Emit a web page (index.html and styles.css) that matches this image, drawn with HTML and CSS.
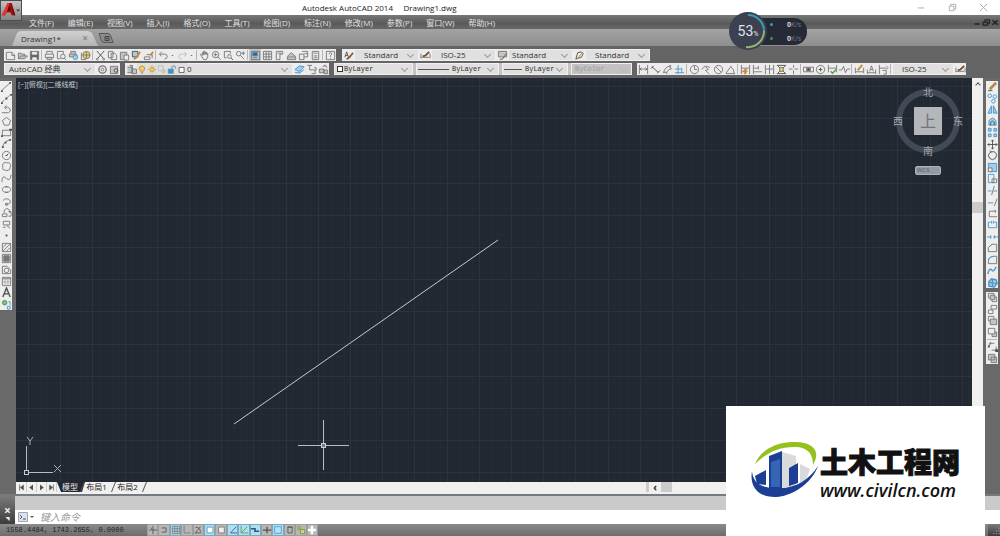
FILE: index.html
```html
<!DOCTYPE html>
<html lang="zh-CN">
  <head>
    <meta charset="utf-8">
    <title>Autodesk AutoCAD 2014 Drawing1.dwg</title>
    <link rel="stylesheet" href="styles.css">
  </head>
  <body>
    <header class="titlebar">
      <h1>Autodesk AutoCAD 2014 &nbsp;&nbsp;&nbsp; Drawing1.dwg</h1>
      <div class="window-buttons" data-tools="minimize restore close"></div>
    </header>
    <button class="app-button" aria-label="AutoCAD">
      <svg viewBox="0 0 21 20">
        <path d="M1 15 7 2h4l4 13h-4l-1-3H6l-2 3z" fill="#a80f12"/>
        <path d="M7 2h2L5 15H1z" fill="#e5342b"/>
        <path d="M9 5 7 10h3z" fill="#4a0808"/>
        <path d="M10 2h1l4 13h-2z" fill="#740a0c"/>
        <path d="M16 9h4l-2 2z" fill="#333"/>
      </svg>
    </button>

    <nav class="menubar">
      <button>文件(F)</button>
      <button>编辑(E)</button>
      <button>视图(V)</button>
      <button>插入(I)</button>
      <button>格式(O)</button>
      <button>工具(T)</button>
      <button>绘图(D)</button>
      <button>标注(N)</button>
      <button>修改(M)</button>
      <button>参数(P)</button>
      <button>窗口(W)</button>
      <button>帮助(H)</button>
      <div class="mdi-buttons" data-tools="mdimin mdirestore mdiclose"></div>
    </nav>

    <div class="filetabs">
      <div class="filetab">
        <span>Drawing1*</span>
        <button aria-label="关闭">×</button>
      </div>
      <button class="newtab" aria-label="新建">
        <svg viewBox="0 0 16 11"><path d="M1 1h9q2 0 3 3l2 6H6Q4 10 3 7z" fill="#8b8b8b" stroke="#555"/><path d="M7 4h4v4H7zM9 5v2M8 6h2" fill="none" stroke="#444"/></svg>
      </button>
    </div>

    <div class="toolbars">
      <div class="toolrow">
        <div class="bar" data-tools="new open save | print preview publish web | cut copy paste match block | undo drop redo drop | pan zoomrt zoomwin zoomprev | props center palette sheet markup calc | help"></div>
        <div class="bar styles">
          <span data-tools="textstyle"></span>
          <label class="combo indent"><select aria-label="文字样式"><option>Standard</option></select></label>
          <span data-tools="dimstyle"></span>
          <label class="combo indent"><select aria-label="标注样式"><option>ISO-25</option></select></label>
          <span data-tools="tablestyle"></span>
          <label class="combo"><select aria-label="表格样式"><option>Standard</option></select></label>
          <span data-tools="leaderstyle"></span>
          <label class="combo indent"><select aria-label="多重引线样式"><option>Standard</option></select></label>
        </div>
      </div>
      <div class="toolrow">
        <div class="bar">
          <label class="combo workspace"><select aria-label="工作空间"><option>AutoCAD 经典</option></select></label>
          <span data-tools="gear wsave"></span>
        </div>
        <div class="bar">
          <span data-tools="layers"></span>
          <span class="layerstate" data-tools="bulb sun freeze lock laycolor"></span>
          <label class="combo layer"><select aria-label="图层"><option>0</option></select></label>
          <span data-tools="laycur layprev laystate"></span>
        </div>
        <div class="bar props">
          <label class="combo mono color"><i class="swatch"></i><select aria-label="颜色"><option>ByLayer</option></select></label>
          <label class="combo mono ltype"><i class="rule"></i><select aria-label="线型"><option>ByLayer</option></select></label>
          <label class="combo mono lweight"><i class="rule short"></i><select aria-label="线宽"><option>ByLayer</option></select></label>
          <label class="combo mono plot"><select aria-label="打印样式" disabled><option>ByColor</option></select></label>
        </div>
        <div class="bar">
          <span data-tools="dlinear daligned darc dordinate | dradius djog ddiam dangle | dquick dbase dcont dspace dbreak | dtol dcenter dinspect djogline | dedit dtedit dupdate |"></span>
          <label class="combo dim"><select aria-label="标注样式控制"><option>ISO-25</option></select></label>
          <span data-tools="dimstyle"></span>
        </div>
      </div>
    </div>

    <main class="work">
      <aside class="side left">
        <div class="column draw" data-tools="line xline pline polygon rect arc circle cloud spline ellipse earc insert mkblock point hatch gradient region table text addsel"></div>
      </aside>
      <section class="view">
        <div class="canvas">
          <svg class="drawing">
            <defs>
              <pattern id="grid" x="12" y="8" width="161" height="161" patternUnits="userSpaceOnUse">
                <path id="minor" stroke="#232b35"/>
                <path id="major" stroke="#2a333e"/>
              </pattern>
            </defs>
            <rect width="100%" height="100%" fill="url(#grid)"/>
            <path d="M218 346 482 162" stroke="#c9c9c9"/>
            <path d="M307.500 342v50M282 367.500h51" stroke="#b9bcc0"/>
            <rect x="305.500" y="365.500" width="4" height="4" fill="#777c83" stroke="#c9ccd0"/>
            <path d="M10.500 392V368M12 394.500h25" stroke="#b9bcc0"/>
            <rect x="8.500" y="392.500" width="4" height="4" fill="none" stroke="#c9ccd0"/>
            <path d="m11 359 3 4 3-4M14 363v4M38 387l7 7m0-7-7 7" fill="none" stroke="#a9adb2"/>
          </svg>
          <span class="viewlabel">[−][俯视][二维线框]</span>
          <div class="viewcube">
            <span class="n">北</span>
            <span class="w">西</span>
            <button class="face">上</button>
            <span class="e">东</span>
            <span class="s">南</span>
            <button class="wcs">WCS</button>
          </div>
        </div>
        <div class="layouts">
          <div class="layoutnav" data-tools="first prev next last"></div>
          <button class="layout current">模型</button>
          <button class="layout">布局1</button>
          <button class="layout">布局2</button>
          <div class="hscroll"><i></i><b>‹</b><em></em></div>
        </div>
      </section>
      <div class="vscroll"><b></b><em></em></div>
      <aside class="side right">
        <div class="column modify" data-tools="erase mcopy mirror offset array move rotate scale stretch trim extend breakpt break join chamfer fillet blend explode"></div>
        <div class="column order" data-tools="front back above under | annofront hatchback"></div>
      </aside>
    </main>

    <section class="command">
      <div class="grip"><button aria-label="关闭">×</button><span>◥</span></div>
      <div class="history"></div>
      <div class="prompt">
        <svg viewBox="0 0 18 10"><path d="M.5.5h9v9h-9z" fill="#dce3ec" stroke="#a0a8b2"/><path d="m2 3 2 2-2 2M5 7h3" fill="none" stroke="#445a78"/><path d="M12 4h4l-2 2z" fill="#555"/></svg>
        <input type="text" aria-label="命令" placeholder="键入命令">
      </div>
    </section>

    <footer class="status">
      <span class="coords">1558.4484, 1743.2655, 0.0000</span>
      <div class="toggles" data-tools="infer snap grid* ortho polar osnap* osnap3 otrack* ducs* dyn* lwt tpy* qp sc am"></div>
      <div class="tray" data-tools="grip"></div>
    </footer>

    <div class="speed">
      <div class="rates">
        <span class="up"><b>0</b>K/s</span>
        <span class="down"><b>0</b>K/s</span>
      </div>
      <div class="dial">
        <svg viewBox="0 0 38 38">
          <path d="M19 3a16 16 0 0 1 16 16" stroke="#3c9bb0"/>
          <path d="M35 19a16 16 0 0 1-18 16" stroke="#93b873"/>
        </svg>
        <span>53<small>%</small></span>
      </div>
    </div>

    <div class="brand">
      <svg viewBox="0 0 70 58">
        <path d="M32 10 46 14v31H32z" fill="#d9dadc"/>
        <path d="m50 22 10 5-6 16-4 2z" fill="#d9dadc"/>
        <path d="m5 34 11-6v15l-9-1z" fill="#1c3f94"/>
        <path d="m19 14 13-5v37q-7 2-13 0z" fill="#1c3f94"/>
        <path d="m21 20 9-3v28h-9z" fill="#3565b4"/>
        <path d="m39 26 9-5v20l-9 3z" fill="#1c3f94"/>
        <path d="M5 22C12 4 36-3 54 1c13 3 15 12 9 22 0-11-5-17-16-18C31 4 17 10 5 22z" fill="#95c11f"/>
        <path d="M2 29c-3 17 8 27 25 26 20-2 36-17 41-31-9 14-22 22-38 22C13 47 3 42 2 29z" fill="#1c3f94"/>
      </svg>
      <div>
        <strong>土木工程网</strong>
        <em>www.civilcn.com</em>
      </div>
    </div>
    <script src="app.js"></script>
  </body>
</html>
```

FILE: styles.css
```css
*, *::before, *::after {
  box-sizing: border-box;
}

body {
  margin: 0;
  height: 100vh;
  position: relative;
  display: flex;
  flex-direction: column;
  overflow: hidden;
  background: #696969;
  color: #333;
  font: 8px/11px "Open Sans", "Noto Sans CJK SC", sans-serif;
}

button, select, input {
  margin: 0;
  padding: 0;
  border: 0;
  background: none;
  color: inherit;
  font: inherit;
}

svg {
  display: block;
}

/* icon buttons */
[data-tools] {
  display: flex;
}

.tool {
  display: flex;
  align-items: center;
  justify-content: center;
  width: 12px;
  height: 12px;
}

.tool svg {
  width: 11px;
  height: 11px;
  fill: none;
  stroke: #777;
}

.tool .b { stroke: #4c96c6; }
.tool .o { stroke: #c78a35; }
.tool .g { stroke: #4d9a50; }
.tool .k { stroke: #505050; }
.tool .fb { fill: #a3cdea; }
.tool .fy { fill: #f0cf62; }
.tool .fg { fill: #c4c4c4; }
.tool .fk { fill: #505050; stroke: none; }

.tool.drop {
  width: 7px;
}

.sep {
  width: 1px;
  margin: 1px;
  background: #b5b5b5;
}

/* window frame */
.titlebar {
  display: flex;
  justify-content: space-between;
  height: 15px;
  background: #fff;
}

.titlebar h1 {
  margin: 0 0 0 302px;
  font-size: 8px;
  font-weight: 400;
  line-height: 15px;
  color: #222;
}

.window-buttons {
  gap: 19px;
  margin-right: 11px;
  align-items: center;
}

.window-buttons svg {
  stroke: #aaa;
}

.app-button {
  position: absolute;
  top: 0;
  left: 0;
  z-index: 1;
  width: 22px;
  height: 21px;
  border: 1px solid #4c4c4c;
  background: linear-gradient(#c2c2c2, #858585);
}

.menubar {
  display: flex;
  gap: 14px;
  height: 14px;
  padding-left: 29px;
  background: linear-gradient(#787878, #5a5a5a 60%, #686868);
  color: #e2e2e2;
  white-space: nowrap;
}

.mdi-buttons {
  margin-left: auto;
  align-items: center;
}

.menubar .tool {
  width: 9px;
}

.mdi-buttons svg {
  stroke: #222;
}

.filetabs {
  display: flex;
  align-items: flex-end;
  height: 17px;
  padding-left: 12px;
  background: linear-gradient(#a3a3a3, #8e8e8e);
}

.filetab {
  display: flex;
  justify-content: space-between;
  align-items: center;
  width: 86px;
  height: 15px;
  padding: 0 10px 0 9px;
  background: linear-gradient(#d0d0d0, #b4b4b4);
  clip-path: polygon(0 100%, 5px 2px, 8px 0, 76px 0, 80px 2px, 100% 100%);
}

.filetab button {
  color: #777;
  font-size: 10px;
}

.newtab svg {
  width: 16px;
  height: 12px;
  margin-bottom: 2px;
}

/* toolbars */
.toolbars {
  padding: 3px 0 3px 4px;
  background: #646464;
}

.toolrow {
  display: flex;
  gap: 6px;
}

.toolrow + .toolrow {
  margin-top: 2px;
  gap: 5px;
}

.bar {
  display: flex;
  height: 12px;
  background: #ececec;
}

.combo {
  position: relative;
  display: flex;
  align-items: center;
  width: 65px;
  padding-left: 3px;
  border: 1px solid #f0f0f0;
  background: #e0e0e0;
}

.combo select {
  flex: 1;
  min-width: 0;
  appearance: none;
  line-height: 10px;
  opacity: 1;
}

.combo::after {
  content: "";
  position: absolute;
  top: 2px;
  right: 5px;
  width: 5px;
  height: 5px;
  border: solid #999;
  border-width: 0 1px 1px 0;
  transform: rotate(45deg);
}

.indent { padding-left: 9px; }
.workspace { width: 92px; padding-left: 4px; }
.layer { width: 106px; padding-left: 0; border-left: 0; }
.dim { width: 62px; padding-left: 9px; }

.layerstate .tool {
  width: 10px;
}

.layerstate, .layer {
  background: #e0e0e0;
}

.props {
  gap: 3px;
  background: #c4c4c4;
}

.mono {
  font: 7px/10px "Liberation Mono", monospace;
}

.color { width: 79px; padding-left: 2px; }
.ltype { width: 83px; padding-left: 1px; }
.lweight { width: 66px; padding-left: 1px; }
.plot { width: 61px; background: #c2c2c2; color: #999; }
.plot::after { opacity: 0.2; }

.swatch {
  width: 6px;
  height: 6px;
  margin-right: 1px;
  border: 1px solid #333;
  background: #fff;
}

.rule {
  width: 31px;
  height: 1px;
  margin-right: 3px;
  background: #555;
}

.rule.short {
  width: 18px;
}

/* drawing area */
.work {
  flex: 1;
  display: flex;
  min-height: 0;
}

.side {
  width: 16px;
  padding-top: 3px;
}

.side.right {
  width: 17px;
  padding-left: 3px;
}

.column {
  flex-direction: column;
  width: 12px;
  background: #eee;
}

.column .tool {
  flex: 1;
  min-height: 0;
}

.column .sep {
  width: auto;
  height: 1px;
}

.draw { height: 229px; }
.modify { height: 207px; }
.order { height: 72px; margin-top: 4px; }

.view {
  flex: 1;
  display: flex;
  flex-direction: column;
  min-width: 0;
}

.canvas {
  flex: 1;
  position: relative;
  min-height: 0;
  overflow: hidden;
  background: #212832;
}

.drawing {
  width: 100%;
  height: 100%;
}

.viewlabel {
  position: absolute;
  top: 1px;
  left: 2px;
  color: #c8ccd0;
  font-size: 7px;
}

.viewcube {
  position: absolute;
  top: 8px;
  right: 9px;
  display: grid;
  grid-template: 12px 46px 14px 25px / 20px 30px 20px;
  place-items: center;
  color: #a6aab0;
  font-size: 10px;
}

.viewcube::before {
  content: "";
  position: absolute;
  top: 3px;
  left: 3px;
  width: 64px;
  height: 64px;
  border: 6px solid #434a55;
  border-radius: 50%;
}

.viewcube > * {
  position: relative;
}

.viewcube .n { grid-area: 1 / 2; }
.viewcube .s { grid-area: 3 / 2; }
.viewcube .w { grid-area: 2 / 1; justify-self: start; }
.viewcube .e { grid-area: 2 / 3; justify-self: end; }

.viewcube .face {
  grid-area: 2 / 2;
  width: 28px;
  height: 28px;
  background: #b4b7ba;
  color: #70757c;
  font-size: 16px;
  line-height: 24px;
}

.viewcube .wcs {
  grid-area: 4 / 2;
  width: 26px;
  height: 9px;
  border: 1px solid #b0b4ba;
  border-radius: 2px;
  background: #959aa2;
  color: #555b64;
  font-size: 6px;
  line-height: 7px;
  text-align: left;
  padding-left: 1px;
}

.vscroll {
  display: flex;
  flex-direction: column;
  justify-content: space-between;
  width: 11px;
  padding-bottom: 281px;
  background: #f0f0f0;
}

.vscroll b {
  width: 4px;
  height: 4px;
  margin: 5px 4px;
  border: solid #555;
  border-width: 1px 0 0 1px;
  transform: rotate(45deg);
}

.vscroll em {
  height: 11px;
  background: #cbcbcb;
}

.layouts {
  display: flex;
  height: 12px;
  padding-left: 1px;
  border-bottom: 2px solid #f0f0ee;
  background: #f0f0ee;
}

.layoutnav .tool {
  width: 10px;
  height: 10px;
  border-right: 1px solid #ccc;
}

.layoutnav .tool svg {
  width: 9px;
  height: 9px;
}

.layout {
  position: relative;
  width: 31px;
  padding-right: 8px;
  color: #222;
  line-height: 10px;
}

.layout::after {
  content: "";
  position: absolute;
  top: 0;
  right: 2px;
  width: 1px;
  height: 10px;
  background: #555;
  transform: skewX(-22deg);
}

.layout.current {
  width: 28px;
  padding-right: 2px;
  background: #212832;
  color: #e8e8e8;
  clip-path: polygon(0 0, 100% 0, 25px 100%, 4px 100%);
}

.hscroll {
  display: flex;
  align-items: center;
  width: 326px;
  margin-left: auto;
}

.hscroll i {
  width: 3px;
  height: 10px;
  background: #ccc;
}

.hscroll b {
  width: 12px;
  color: #222;
  font-size: 10px;
  line-height: 8px;
  text-align: center;
}

.hscroll em {
  width: 11px;
  height: 10px;
  background: #cbcbcb;
}

/* command line */
.command {
  display: grid;
  grid-template: 14px 14px / 15px 1fr;
  border-top: 2px solid #747a7e;
}

.grip {
  grid-row: 1 / 3;
  display: flex;
  flex-direction: column;
  align-items: center;
  justify-content: flex-end;
  background: linear-gradient(#7a7a7a, #3c3c3c);
  color: #eee;
}

.grip button {
  font-size: 12px;
  font-weight: 700;
  line-height: 10px;
}

.grip span {
  font-size: 4px;
  line-height: 8px;
}

.history {
  background: #cacaca;
}

.prompt {
  display: flex;
  align-items: center;
  gap: 4px;
  padding-left: 3px;
  background: #fff;
}

.prompt svg {
  width: 18px;
  height: 10px;
}

.prompt input {
  flex: 1;
  font-size: 10px;
  line-height: 12px;
}

.prompt input::placeholder {
  color: #999;
  font-style: italic;
}

.status {
  display: flex;
  height: 12px;
  padding-left: 6px;
  background: linear-gradient(#8a8a8a, #6d6d6d);
}

.coords {
  width: 141px;
  color: #222;
  font: 7px/12px "Liberation Mono", monospace;
}

.toggles {
  width: 171px;
}

.toggles .tool {
  flex: 1;
  min-width: 0;
  border: 1px solid #9c9c9c;
  background: #b7b7b7;
}

.toggles .tool svg {
  flex: none;
  width: 10px;
  height: 10px;
}

.toggles .tool.on {
  border-color: #79a9bf;
  background: #b0def0;
}

.tray {
  margin-left: auto;
}

/* network speed widget */
.speed {
  position: absolute;
  top: 12px;
  right: 193px;
  width: 78px;
  height: 38px;
  display: flex;
  align-items: center;
}

.rates {
  flex: 1;
  display: flex;
  flex-direction: column;
  gap: 3px;
  margin-left: 19px;
  padding: 1px 6px 1px 22px;
  border-radius: 3px 13px 13px 3px;
  background: #252a36;
  color: #747b87;
  font-size: 7px;
  line-height: 11px;
}

.rates span {
  display: flex;
  align-items: center;
}

.rates span::before {
  content: "";
  width: 3px;
  height: 3px;
  margin-right: 14px;
  border-radius: 50%;
  background: #4099b0;
}

.rates .down::before {
  background: #429251;
}

.rates b {
  color: #d5d7db;
}

.dial {
  position: absolute;
  left: 0;
  width: 38px;
  height: 38px;
  border-radius: 50%;
  background: #3b4150;
  color: #e1e4e9;
}

.dial svg {
  position: absolute;
  fill: none;
  stroke-width: 2;
}

.dial span {
  display: block;
  font: 14px/38px Roboto, sans-serif;
  text-align: center;
}

.dial small {
  font-size: 7px;
}

/* site badge */
.brand {
  position: absolute;
  right: 15px;
  bottom: 0;
  display: flex;
  width: 259px;
  height: 130px;
  padding: 36px 0 0 24px;
  background: #fff;
  color: #111;
}

.brand svg {
  width: 70px;
  height: 58px;
}

.brand div {
  display: flex;
  flex-direction: column;
  padding-top: 6px;
}

.brand strong {
  font-family: "Liberation Sans", "Noto Sans CJK SC", sans-serif;
  font-size: 28px;
  font-weight: 900;
  line-height: 32px;
  -webkit-text-stroke: 1px #111;
}

.brand em {
  font-size: 18px;
  font-weight: 600;
  line-height: 20px;
}
```

FILE: app.js
```js
var icons = {
  minimize: '<path d="M2 6.500h7"/>',
  restore: '<path d="M2.500 4.500h5v5h-5zM4 4V2.500h5.500V8H8"/>',
  close: '<path d="m2 2 8 8m0-8-8 8"/>',
  mdimin: '<path d="M2 8h7" stroke-width="2"/>',
  mdirestore: '<path d="M1.500 5.500h6v4h-6zM4 5V2.500h6V7H8" stroke-width="1.500"/>',
  mdiclose: '<path d="m2 3 7 6m0-6L2 9" stroke-width="2"/>',
  "new": '<path d="M1.500 2.500h6l3 3v5h-9zM7.500 3v3h3"/>',
  open: '<path d="M1.500 9.500v-6h3l1 1h3v2M1.500 9.500l3-3h7l-3 3z" class="fg"/>',
  save: '<path d="M1.500 1.500h9v9h-9z" fill="#666"/><path d="M3.500 2.500h5v2h-5zM4 8.500h4v2H4z" fill="#eee" stroke="#eee"/>',
  print: '<path d="M3 4V1.500h6V4M1.500 4.500h9v4h-9zM3.500 8h5v2.500h-5z"/>',
  preview: '<path d="M8 4V1.500H1.500v8H5"/><circle cx="7.500" cy="7" r="2.500"/><path d="m9 9 2 2"/>',
  publish: '<path d="M3 4V1.500h5V4M1.500 4.500h8v3h-8z" class="fg"/><circle cx="8" cy="8" r="2.500" class="b fb"/>',
  web: '<circle cx="7" cy="5.500" r="4" class="fy"/><path d="M3 5.500h8M7 2v7M1.500 3v7.500h5"/>',
  cut: '<path d="m2 1 7 8M10 1 3 9" class="k"/><circle cx="2.500" cy="10" r="1"/><circle cx="9.500" cy="10" r="1"/>',
  copy: '<path d="M1.500 1.500h5v7h-5zM4.500 3.500h4l2 2v5h-6z"/>',
  paste: '<path d="M1.500 2.500h7v8h-7z" class="fg"/><path d="M5.500 5.500h5v5.500h-5z" fill="#eee"/>',
  match: '<path d="M1.500 1.500h6v6h-6z" class="fb k"/><path d="m10 2-4 6-3 2" class="o" stroke-width="2"/>',
  block: '<path d="M1.500 7.500h6v3h-6zM4 5h6v4"/><path d="m8 6 3-4" class="o" stroke-width="2"/>',
  undo: '<path d="M4 2 1.500 4.500 4 7M2 4.500h5q3 0 3 2.500t-3 3"/>',
  redo: '<path d="m8 2 2.500 2.500L8 7m2-2.500H5Q2 4.500 2 7t3 3" stroke="#bbb"/>',
  drop: '<path d="M4 5h4L6 7z" class="fk"/>',
  pan: '<path d="M3 7 1.500 5l1-1L4 6V2.500h1V5 1.500h1.500V5 2.500H8V5 3.500h1.500v4L8 10.500H5z"/>',
  zoomrt: '<circle cx="5" cy="5" r="3.500"/><path d="m7.500 7.500 3 3M5 3v4M3 5h4"/>',
  zoomwin: '<path d="M8 4V1.500H1.500v7H4"/><circle cx="7" cy="7" r="2"/><path d="m8.500 8.500 2.500 2.500" class="k"/>',
  zoomprev: '<circle cx="4" cy="4" r="2.500"/><path d="m6 6 4 4M7 3.500h4m-2-2v4"/>',
  props: '<path d="M1.500 1.500h9v9h-9z"/><path d="M3 2.500h5v4H3z" class="b" fill="#35658f"/><path d="M3 8.500h5"/>',
  center: '<path d="M1.500 1.500h9v9h-9zM1.500 4.500h9M1.500 7.500h9M4.500 1.500v9M7.500 1.500v9"/>',
  palette: '<path d="M2.500 1.500h7v3h-3v6h-4zM4 3.500h4"/>',
  sheet: '<path d="m1.500 7 4-4 5 4M1.500 7.500h9v3h-9z" class="fg"/>',
  markup: '<path d="M1.500 4.500h5v6h-5zM4.500 1.500h6v6h-4M7 4h3"/>',
  calc: '<path d="M2.500 1.500h7v9h-7zM4 3.500h4M4 6.500h4M4 8.500h4"/>',
  help: '<path d="M1.500 1.500h9v9h-9zM4.500 4.500q0-1.500 1.500-1.500t1.500 1.500L6 6v1.500m0 1v1"/>',
  textstyle: '<path d="m2 8 2-6 2 6M3 6h2" class="k"/><path d="m11 3-4 5-3 2" stroke="#8f5d33" stroke-width="2"/>',
  dimstyle: '<path d="M1 4v5M11 4v5M1 8h9"/><path d="m10 2-4 4-3 1" stroke="#7a4e2a" stroke-width="2"/>',
  tablestyle: '<path d="M1.500 1.500h9v6h-9z" class="fg"/><path d="m10 4-4 6H3" stroke="#7a4e2a"/>',
  leaderstyle: '<path d="m2 10 2-7 4-1 2 2-2 4-4 1z" class="k"/><path d="m10 2-6 7" class="o"/>',
  gear: '<circle cx="6" cy="6" r="4" stroke-width="1.500"/><circle cx="6" cy="6" r="1.500"/>',
  wsave: '<path d="M1.500 2.500h8v8h-8z" class="fg"/><circle cx="7.500" cy="7" r="2" class="k"/>',
  layers: '<path d="M1.500 3.500h5v6h-5M4 1.500h3v9M6.500 5.500h5v5h-5z" class="fg"/>',
  bulb: '<path d="M4 8Q2 5 3 3q3-3 6 0 1 2-1 5z" class="fy o"/><path d="M4.500 10h3"/>',
  sun: '<circle cx="6" cy="6" r="2.500" class="fy o"/><path d="M6 1v1.500M6 9.500V11M1 6h1.500M9.500 6H11M2.500 2.500l1 1m5 5 1 1m0-7-1 1m-5 5-1 1" class="o"/>',
  freeze: '<path d="M1.500 1.500h6v6h-6z" stroke="#bbb"/><circle cx="8" cy="8" r="2" class="fy" stroke="#bbb"/>',
  lock: '<path d="M1.500 5.500h6v5h-6z" class="b" fill="#3f8fc4"/><path d="M6 5V2.500q2-2 4 0V5"/>',
  laycolor: '<path d="M2.500 3.500h6v6h-6z" fill="#fff" class="k"/>',
  laycur: '<path d="m1 6 5-4 5 1-5 5zM1 9l5 1 5-4" class="b fb"/>',
  layprev: '<path d="M1.500 1.500h5M4 1.500v5h6v4H6M9 4h2v3"/>',
  laystate: '<path d="M1.500 5.500h5v4h-5zM5 3l3-2 2 3M6.500 6.500h4v4h-4z" class="fg"/>',
  dlinear: '<path d="M1.500 1v10M10.500 1v10M2 5.500h8M4 4 2 5.500 4 7m4-3 2 1.500L8 7"/>',
  daligned: '<path d="m2 3 7 6M1 5l3-3M8 10l3-3" class="k"/>',
  darc: '<path d="M2 10q0-7 8-8M5 11q0-5 6-6M1 9h4M9 1v4"/>',
  dordinate: '<path d="M1 9.500h10M1 5.500h7M4.500 1v10M8.500 4v6" class="b"/>',
  dradius: '<circle cx="6" cy="6" r="4.500"/><path d="M6 6V2M6 6h3"/>',
  djog: '<path d="M1 6q3-6 9-2M5 3l3 3-3 1 4 4"/>',
  ddiam: '<circle cx="6" cy="6" r="4.500"/><path d="m3 3 6 6"/>',
  dangle: '<path d="M1 10.500h10M1 10l6-8M6 3q4 2 4 7"/>',
  dquick: '<path d="M1.500 1v10M10.500 1v10M2 4.500h8"/><path d="m7 5-3 3h3l-2 3" class="o" stroke-width="2"/>',
  dbase: '<path d="M1.500 1v10M2 4.500h5M2 8.500h9M7 2v4"/>',
  dcont: '<path d="M1.500 1v10M6 1v10M10.500 1v10M2 5.500h8"/>',
  dspace: '<path d="M1 1.500h10M1 10.500h10M2 2l8 8M10 2l-8 8" class="k"/><path d="M4 4h4v4H4z" class="fy"/>',
  dbreak: '<path d="M1 5.500h4m2 0h4M6 1v3m0 3v4"/>',
  dtol: '<path d="M.5 3.500h11v5H.5zM4 4v4M8 4v4"/><path d="M4.500 4.500h3v3h-3z" fill="#444"/>',
  dcenter: '<circle cx="6" cy="6" r="4.500"/><path d="M4 6h4M6 4v4" class="k"/>',
  dinspect: '<path d="M1.500 1v8M10.500 1v8M2 4.500h8"/><path d="m4 8 2 2 4-4" class="g" stroke-width="1.500"/>',
  djogline: '<path d="M0 6.500h3l2-4 2 7 2-4h3"/>',
  dedit: '<path d="M1.500 4v6M10.500 4v6M2 8.500h8"/><path d="m9 1-5 6" class="o" stroke-width="2"/>',
  dtedit: '<path d="M1.500 6v5M10.500 6v5M2 9.500h8M4 8l2-6 2 6M5 6h2"/>',
  dupdate: '<path d="M1.500 1v10M2 4.500h7M9 2l2 2-2 2M5 7h4v4H6"/>',
  line: '<path d="m1 10 9-8"/><path d="M0 10h2v2H0zM9 1h2v2H9z" class="fk"/>',
  xline: '<path d="m1 10 9-8" stroke-dasharray="3 1"/><path d="M5 5h2v2H5zM0 10h2v2H0zM10 1h2v2h-2z" class="fk"/>',
  pline: '<path d="M1 9.500h7q3-1 2-4-2-3-6-2l2-2M4 4l2 2"/>',
  polygon: '<path d="m6 1.500 4.500 3.500-2 5h-5l-2-5z"/>',
  rect: '<path d="M1.500 3.500h9v6h-9z"/><path d="M9 2h3v2H9zM0 9h2v2H0z" class="fk"/>',
  arc: '<path d="M2 10q0-6 8-8"/><path d="M1 9h2v2H1zM9 1h2v2H9zM4 4h2v2H4z" class="fk"/>',
  circle: '<circle cx="6" cy="6" r="4.500"/><path d="m6 6 2-2M5 6h2" class="k"/>',
  cloud: '<path d="M3 2q2-1 3 0 3-1 4 1 1 2 0 4 0 3-2 3-2 1-3 0-4 0-3-3-1-3 1-5z"/>',
  spline: '<path d="M1 10q0-9 5-4 4 4 5-4"/>',
  ellipse: '<ellipse cx="6" cy="6" rx="4.500" ry="3"/><path d="M5 3h2M5 9h2" class="k"/>',
  earc: '<path d="M2 5q4-4 8 0 1 4-4 4M5 8h2v2H5z"/>',
  insert: '<path d="M3.500 6.500v-3l3-2 3 2v3M1.500 7.500h5v3h-5zM8 5h3v5H8"/>',
  mkblock: '<path d="M2.500 2.500h7v4h-7zM6 7l4 3M2 9h3"/>',
  point: '<path d="M5 5h2v2H5z" class="fk"/>',
  hatch: '<path d="M1.500 1.500h9v9h-9zM2 6l4-4M2 10l8-8M6 10l4-4"/>',
  gradient: '<path d="M1.500 1.500h9v9h-9z"/><path d="M3 3h6v6H3z" fill="#777"/>',
  region: '<path d="M1.500 2.500h5l4 4v4h-9z"/><circle cx="6" cy="7" r="2.500"/>',
  table: '<path d="M1.500 1.500h9v9h-9zM1.500 3h9"/><path d="M2 6.500h8M4.500 3v7M7.500 3v7" stroke="#aaa"/>',
  text: '<path d="M2 11 6 1l4 10M3.500 7.500h5" class="k" stroke-width="1.500"/>',
  addsel: '<circle cx="4" cy="4" r="2.500" class="g" fill="#85b985"/><path d="M8 3h2v4M7 8h3v3H7z" class="b"/>',
  erase: '<path d="m3 9 7-7" stroke="#b98b49" stroke-width="3"/><path d="M1 10.500h5" class="k"/>',
  mcopy: '<circle cx="3" cy="3" r="2" class="b"/><circle cx="8.500" cy="4" r="2" class="b"/><circle cx="7" cy="9" r="2" class="b"/>',
  mirror: '<path d="M5 2v8H1zM7 2v8h4z" class="b fb"/>',
  offset: '<path d="M2 10V8q-1-4 4-6 5 2 4 6v2z" class="b fb"/><path d="M4 10V7q2-3 4 0v3" class="k"/>',
  array: '<path d="M1.500 1.500h3v3h-3zM7.500 1.500h3v3h-3zM1.500 7.500h3v3h-3zM7.500 7.500h3v3h-3z" class="b fb"/>',
  move: '<path d="M6 1v10M1 6h10M4.500 2.500 6 1l1.500 1.500m-3 7L6 11l1.500-1.500m-5-5L1 6l1.500 1.500m7-3L11 6 9.500 7.500" class="k"/>',
  rotate: '<path d="M5 2q5-1 5.500 4-.5 4-4.500 4.500Q2 10 1.500 6 2 3 5 2L3 1" class="k"/>',
  scale: '<path d="M1.500 1.500h9v9h-9z" class="b fb"/><path d="M1.500 6.500h4v4h-4z" fill="#eee"/>',
  stretch: '<path d="M1.500 1.500h6v9h-6z" class="b"/><path d="M5.500 6.500h5v4h-5z"/>',
  trim: '<path d="M1 6.500h4m2 0h4" class="b"/><path d="m5 11 3-10"/>',
  extend: '<path d="M1 7.500h6" class="b"/><path d="m8 11 3-8"/>',
  breakpt: '<path d="M10 3.500H2.500v6H11M9 2v3"/>',
  "break": '<path d="M4 3.500H1.500v6h9v-6H8M5 2v3M7 2v3" class="b"/>',
  join: '<path d="M0 6.500h5m2 0h5M4 4.500v4m4-4v4" class="b"/>',
  chamfer: '<path d="M1.500 10.500V6l4-3.500h5v8z"/><path d="m1.500 6 4-3.500" class="b"/>',
  fillet: '<path d="M1.500 10.500V8q0-5 6-5.500h3v8z"/><path d="M1.500 8q0-5 6-5.500" class="b"/>',
  blend: '<path d="M1 10q1-7 4-5 2 4 5-3" class="b" stroke-width="1.500"/>',
  explode: '<path d="m2 5 3-3 5 1 1 4-3 4-6-1zM3 6l7 1M6 3v7" class="b fb" stroke-width="1.500"/>',
  front: '<path d="M1.500 1.500h6v5h-6zM5.500 5.500h5v5h-5z"/><path d="M3.500 3.500h5v5h-5z" class="fg"/>',
  back: '<path d="M4.500 1.500h6v4h-6zM1.500 6.500h5v4h-5z"/>',
  above: '<path d="M1.500 1.500h6v5h-6z"/><path d="M3.500 4.500h7v6h-7z" class="fg"/>',
  under: '<path d="M5.500 5.500h5v5h-5z" class="fg"/><path d="M1.500 1.500h7v6h-7z" fill="#eee"/>',
  annofront: '<path d="M2.500 6V2.500H8M4 1v3M5 10h5V6"/><path d="M9 9h3v3H9zM1 5h2v2H1z" class="fk"/>',
  hatchback: '<path d="M1.500 1.500h7v6h-7zM4.500 4.500h6v6h-6z" class="fg"/>',
  first: '<path d="M3.500 2v8" class="k"/><path d="M9 2v8L4 6z" class="fk"/>',
  prev: '<path d="M8 2v8L3 6z" class="fk"/>',
  next: '<path d="M4 2v8l5-4z" class="fk"/>',
  last: '<path d="M8.500 2v8" class="k"/><path d="M3 2v8l5-4z" class="fk"/>',
  infer: '<path d="M6 1v10M1 6h10M3 3l2 2" class="k"/>',
  snap: '<path d="M3 3.500h5.500v5H3" class="k"/>',
  grid: '<path d="M1.500 1.500h9v9h-9zM1.500 4.500h9M1.500 7.500h9M4.500 1.500v9M7.500 1.500v9"/>',
  ortho: '<path d="M2.500 1v8.500H10"/>',
  polar: '<path d="M2 9.500h8M3 9l6-7M3 3q5-1 6 5" class="k"/>',
  osnap: '<path d="M2.500 2.500h7v7h-7z" fill="#fff" class="b"/>',
  osnap3: '<path d="M3 2.500h7v7H3z" fill="#eee"/>',
  otrack: '<path d="M10 2 3 9.500h8" stroke="#205d88"/>',
  ducs: '<path d="M2.500 1v8.500H11M3 9l7-7" class="g"/>',
  dyn: '<path d="M1 4.500h5v3h5" stroke="#205d88" stroke-width="2"/>',
  lwt: '<path d="M6 2v8M1 6h10" class="k" stroke-width="1.500"/>',
  tpy: '<path d="M2 2h8v8H2z" class="b" fill="#b9e1f6"/>',
  qp: '<path d="M3.500 2.500h5v7h-5zM3 2.500h6" class="k"/>',
  sc: '<path d="M2 2h3v3H2zM5.500 5.500h5v5h-5z" class="g fy"/>',
  am: '<path d="M6 1v10M1 6h10" stroke="#fff" stroke-width="3"/>',
  grip: '<path d="M11 3v1M8 6v1M11 6v1M5 9v1M8 9v1M11 9v1" stroke="#ccc"/>'
};

// fill every toolbar from its list of tools
document.querySelectorAll("[data-tools]").forEach(function(bar) {
  bar.innerHTML = bar.dataset.tools.split(" ").map(function(tool) {
    if (tool == "|") return '<span class="sep"></span>';
    var name = tool.replace("*", "");
    return '<button class="tool ' + name + (tool != name ? " on" : "") + '" aria-label="' + name + '">' +
      '<svg viewBox="0 0 12 12">' + icons[name] + '</svg></button>';
  }).join("");
});

// five grid cells fit in one 161px tile
var major = "", minor = "";
for (var i = 0; i < 25; i++) {
  var p = Math.round(i * 161 / 25) + 0.5;
  var d = "M" + p + " 0V161M0 " + p + "H161";
  if (i % 5) minor += d;
  else major += d;
}
document.getElementById("minor").setAttribute("d", minor);
document.getElementById("major").setAttribute("d", major);
```
